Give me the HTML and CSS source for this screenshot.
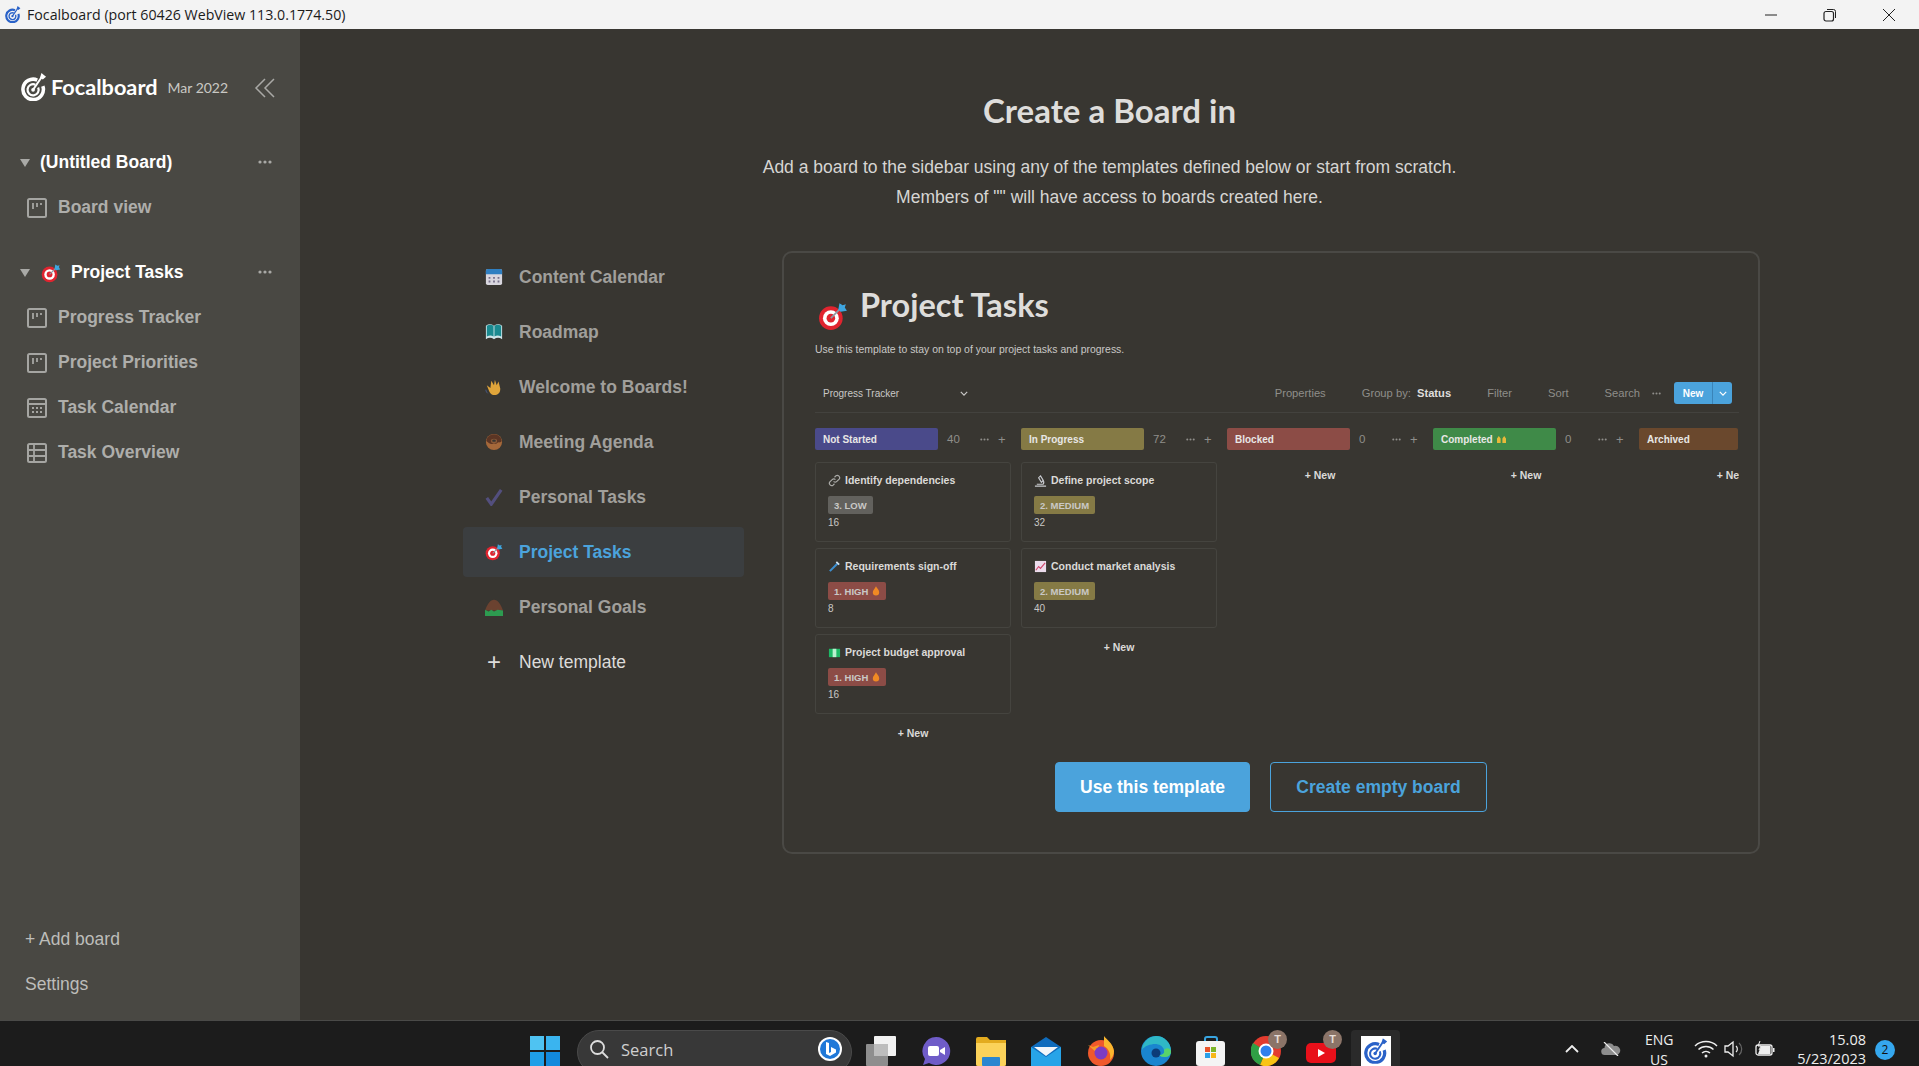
FILE: index.html
```html
<!DOCTYPE html>
<html lang="en">
<head>
  <meta charset="UTF-8" />
  <title>Focalboard</title>
  <link rel="stylesheet" href="styles.css">
</head>
<body>

  <!-- Shared icons -->
  <svg class="sprite" width="0" height="0">
    <symbol id="i-board" viewBox="0 0 20 20">
      <rect x="1" y="1" width="18" height="18" rx="1.5" fill="none" stroke="currentColor" stroke-width="2"/>
      <path d="M6 5v6M10 5v4M14 5v2" stroke="currentColor" stroke-width="1.8" fill="none"/>
    </symbol>
    <symbol id="i-cal" viewBox="0 0 20 20">
      <rect x="1" y="1" width="18" height="18" rx="1.5" fill="none" stroke="currentColor" stroke-width="2"/>
      <path d="M1 6h18M5 10h2M9 10h2M13 10h2M5 14h2M9 14h2M13 14h2" stroke="currentColor" stroke-width="1.8" fill="none"/>
    </symbol>
    <symbol id="i-table" viewBox="0 0 20 20">
      <rect x="1" y="1" width="18" height="18" rx="1.5" fill="none" stroke="currentColor" stroke-width="2"/>
      <path d="M1 7h18M1 13h18M7 1v18" stroke="currentColor" stroke-width="1.8" fill="none"/>
    </symbol>
    <symbol id="i-target" viewBox="0 0 28 28">
      <circle cx="12" cy="16" r="11" fill="#e0242f"/>
      <circle cx="12" cy="16" r="7.4" fill="#fff"/>
      <circle cx="12" cy="16" r="4" fill="#e0242f"/>
      <path d="M12 16L22 6" stroke="#8a9aa5" stroke-width="1.6"/>
      <path d="M19 8l1-6 3 2 3-1-1 3 2 3-6 1z" fill="#3ea6e0"/>
    </symbol>
    <symbol id="i-dots" viewBox="0 0 14 4">
      <circle cx="2" cy="2" r="1.6" fill="currentColor"/>
      <circle cx="7" cy="2" r="1.6" fill="currentColor"/>
      <circle cx="12" cy="2" r="1.6" fill="currentColor"/>
    </symbol>
    <symbol id="i-logo" viewBox="0 0 28 30">
      <path d="M17.500 7.500A11 11 0 1 0 23.500 14" fill="none" stroke="currentColor" stroke-width="3.800"/>
      <path d="M15.500 12.500A6 6 0 1 0 18.500 15.500" fill="none" stroke="currentColor" stroke-width="2.400"/>
      <circle cx="13" cy="18" r="2" fill="currentColor"/>
      <path d="M13 18L22.500 4" stroke="currentColor" stroke-width="2.200"/>
      <path d="M22 0l-1.500 5 3 2 3.500-3z" fill="currentColor"/>
    </symbol>
    <symbol id="i-chev" viewBox="0 0 10 6">
      <path d="M1 1l4 4 4-4" fill="none" stroke="currentColor" stroke-width="1.5"/>
    </symbol>
    <symbol id="i-fire" viewBox="0 0 10 12">
      <path d="M5 0c1 3 4 4 4 7.500a4 4 0 0 1-8 0C1 5 3 4 5 0z" fill="#f08a24"/>
    </symbol>
  </svg>

  <div class="titlebar">
    <svg class="titlebar-icon" viewBox="0 0 28 30"><use href="#i-logo" color="#2a62c8"/></svg>
    <span class="titlebar-text">Focalboard (port 60426 WebView 113.0.1774.50)</span>
    <div class="window-btns">
      <svg viewBox="0 0 14 14"><path d="M1 7h12" stroke="#222" stroke-width="1"/></svg>
      <svg viewBox="0 0 14 14"><rect x="1" y="3.500" width="9.500" height="9.500" rx="2" fill="none" stroke="#222" stroke-width="1.200"/><path d="M4 1.500h6.500a2 2 0 0 1 2 2V10" fill="none" stroke="#222"/></svg>
      <svg viewBox="0 0 14 14"><path d="M1 1l12 12M13 1L1 13" stroke="#222" stroke-width="1"/></svg>
    </div>
  </div>

  <div class="app">
    <aside class="sidebar">
      <div class="side-header">
        <svg class="logo" viewBox="0 0 28 30"><use href="#i-logo"/></svg>
        <span class="logo-text">Focalboard</span>
        <span class="logo-date">Mar 2022</span>
        <svg class="collapse" viewBox="0 0 22 20"><path d="M11 1L2 10l9 9M20 1l-9 9 9 9" fill="none" stroke="currentColor" stroke-width="1.500"/></svg>
      </div>

      <div class="side-group">
        <div class="side-row side-title">
          <span class="arrow"></span>
          <span class="side-name">(Untitled Board)</span>
          <svg class="side-dots"><use href="#i-dots"/></svg>
        </div>
        <div class="side-row side-view"><svg class="view-icon"><use href="#i-board"/></svg>Board view</div>
      </div>

      <div class="side-group">
        <div class="side-row side-title">
          <span class="arrow"></span>
          <svg class="side-emoji"><use href="#i-target"/></svg>
          <span class="side-name">Project Tasks</span>
          <svg class="side-dots"><use href="#i-dots"/></svg>
        </div>
        <div class="side-row side-view"><svg class="view-icon"><use href="#i-board"/></svg>Progress Tracker</div>
        <div class="side-row side-view"><svg class="view-icon"><use href="#i-board"/></svg>Project Priorities</div>
        <div class="side-row side-view"><svg class="view-icon"><use href="#i-cal"/></svg>Task Calendar</div>
        <div class="side-row side-view"><svg class="view-icon"><use href="#i-table"/></svg>Task Overview</div>
      </div>

      <div class="side-footer">
        <div class="side-link">+ Add board</div>
        <div class="side-link">Settings</div>
      </div>
    </aside>

    <main class="main">
      <h1>Create a Board in</h1>
      <p class="sub">Add a board to the sidebar using any of the templates defined below or start from scratch.</p>
      <p class="sub">Members of "" will have access to boards created here.</p>

      <div class="template-row">
        <ul class="template-list">
          <li class="template-item">
            <svg class="template-icon" viewBox="0 0 20 20"><rect x="1" y="1" width="18" height="18" rx="2" fill="#d8d6de"/><path d="M1 3a2 2 0 0 1 2-2h14a2 2 0 0 1 2 2v4H1z" fill="#2f7fc1"/><path d="M4 10h2v2H4zM9 10h2v2H9zM14 10h2v2h-2zM4 14h2v2H4zM9 14h2v2H9zM14 14h2v2h-2z" fill="#77708a"/></svg>
            Content Calendar
          </li>
          <li class="template-item">
            <svg class="template-icon" viewBox="0 0 20 20"><path d="M1 3c3-2 6-2 9 0 3-2 6-2 9 0v15c-3-2-6-2-9 0-3-2-6-2-9 0z" fill="#cfe6ea"/><path d="M2 3c3-1.500 5-1.500 7.500 0v12c-2.500-1.500-4.500-1.500-7.500 0zM10.500 3c2.500-1.500 4.500-1.500 7.500 0v12c-3-1.500-5-1.500-7.500 0z" fill="#1a8a90"/></svg>
            Roadmap
          </li>
          <li class="template-item">
            <svg class="template-icon" viewBox="0 0 20 20"><path d="M7 3l3 5 1-6 2 6 2-4 2 8c0 5-3 7-6.500 7S5 16 4 13L2 8l4 3z" fill="#e0a53a"/><path d="M1 13c0 2 1 3 2 4" stroke="#4a5f8f" fill="none"/></svg>
            Welcome to Boards!
          </li>
          <li class="template-item">
            <svg class="template-icon" viewBox="0 0 20 20"><circle cx="10" cy="10" r="9" fill="#a5683a"/><path d="M1.500 9a8.500 7.500 0 0 1 17 0c-2 3-3 0-5 2s-3 0-5 1-5-1-7-3z" fill="#5b3524"/><ellipse cx="10" cy="9" rx="3.500" ry="2.500" fill="#8a5a38"/><ellipse cx="10" cy="8.500" rx="2" ry="1.300" fill="#383631"/></svg>
            Meeting Agenda
          </li>
          <li class="template-item">
            <svg class="template-icon" viewBox="0 0 20 20"><path d="M2 11l5 7L18 2" fill="none" stroke="#534f7e" stroke-width="3.500"/></svg>
            Personal Tasks
          </li>
          <li class="template-item is-active">
            <svg class="template-icon"><use href="#i-target"/></svg>
            Project Tasks
          </li>
          <li class="template-item">
            <svg class="template-icon" viewBox="0 0 20 20"><path d="M0 14C3 6 6 2 10 2s7 4 10 12z" fill="#6b4230"/><path d="M0 13l4 2 3-2 3 2 4-2 6 1v6H0z" fill="#2d9b50"/></svg>
            Personal Goals
          </li>
          <li class="template-item is-new"><span class="template-plus">+</span>New template</li>
        </ul>

        <section class="preview">
          <div class="preview-title">
            <svg class="preview-emoji"><use href="#i-target"/></svg>
            <h2>Project Tasks</h2>
          </div>
          <p class="preview-desc">Use this template to stay on top of your project tasks and progress.</p>

          <div class="view-header">
            <span class="view-name">Progress Tracker</span>
            <svg class="view-chev"><use href="#i-chev"/></svg>
            <div class="view-actions">
              <span class="action act-gap">Properties</span>
              <span class="action act-gap">Group by: <b>Status</b></span>
              <span class="action act-gap">Filter</span>
              <span class="action act-gap">Sort</span>
              <span class="action act-search">Search</span>
              <svg class="act-dots"><use href="#i-dots"/></svg>
              <div class="new-btn"><span>New</span><i><svg><use href="#i-chev"/></svg></i></div>
            </div>
          </div>

          <div class="columns">
            <div class="col">
              <div class="col-head">
                <span class="col-label lbl-purple">Not Started</span><span class="col-count">40</span>
                <svg class="col-dots"><use href="#i-dots"/></svg><span class="col-plus">+</span>
              </div>
              <div class="card">
                <div class="card-title">
                  <svg class="card-icon" viewBox="0 0 14 14"><path d="M6 8a2.500 2.500 0 0 0 3.500 0l2.500-2.500A2.500 2.500 0 0 0 8.500 2L7 3.500M8 6a2.500 2.500 0 0 0-3.500 0L2 8.500A2.500 2.500 0 0 0 5.500 12L7 10.500" fill="none" stroke="#a9a9a6" stroke-width="1.300"/></svg>
                  Identify dependencies
                </div>
                <span class="badge bg-grey">3. LOW</span>
                <div class="card-num">16</div>
              </div>
              <div class="card">
                <div class="card-title">
                  <svg class="card-icon" viewBox="0 0 14 14"><path d="M2 12L10 4" stroke="#3d8fd0" stroke-width="2.200"/><path d="M9 2l3 3" stroke="#d5e6f2" stroke-width="1.800"/></svg>
                  Requirements sign-off
                </div>
                <span class="badge bg-red">1. HIGH <svg class="fire"><use href="#i-fire"/></svg></span>
                <div class="card-num">8</div>
              </div>
              <div class="card">
                <div class="card-title">
                  <svg class="card-icon" viewBox="0 0 14 14"><path d="M1 3h12v9H1z" fill="#1db866"/><rect x="5" y="3" width="4" height="9" fill="#b9f0cf"/></svg>
                  Project budget approval
                </div>
                <span class="badge bg-red">1. HIGH <svg class="fire"><use href="#i-fire"/></svg></span>
                <div class="card-num">16</div>
              </div>
              <div class="col-new">+ New</div>
            </div>

            <div class="col">
              <div class="col-head">
                <span class="col-label lbl-yellow">In Progress</span><span class="col-count">72</span>
                <svg class="col-dots"><use href="#i-dots"/></svg><span class="col-plus">+</span>
              </div>
              <div class="card">
                <div class="card-title">
                  <svg class="card-icon" viewBox="0 0 14 14"><path d="M1 13h12M3 11h7M7 2l3 5-2 2-3-5zM9 6a4 4 0 0 1 1 5" fill="none" stroke="#c9cbd0" stroke-width="1.200"/></svg>
                  Define project scope
                </div>
                <span class="badge bg-yellow">2. MEDIUM</span>
                <div class="card-num">32</div>
              </div>
              <div class="card">
                <div class="card-title">
                  <svg class="card-icon" viewBox="0 0 14 14"><rect x="1" y="1" width="12" height="12" fill="#ecdcec"/><path d="M2 11l3-4 2 2 5-6" fill="none" stroke="#d0456a" stroke-width="1.200"/></svg>
                  Conduct market analysis
                </div>
                <span class="badge bg-yellow">2. MEDIUM</span>
                <div class="card-num">40</div>
              </div>
              <div class="col-new">+ New</div>
            </div>

            <div class="col">
              <div class="col-head">
                <span class="col-label lbl-red">Blocked</span><span class="col-count">0</span>
                <svg class="col-dots"><use href="#i-dots"/></svg><span class="col-plus">+</span>
              </div>
              <div class="col-new col-new-top">+ New</div>
            </div>

            <div class="col">
              <div class="col-head">
                <span class="col-label lbl-green">Completed <svg class="hands" viewBox="0 0 12 10"><path d="M1 9V4l2-3 2 3v5zM7 9V4l2-3 2 3v5z" fill="#e8b93a"/></svg></span><span class="col-count">0</span>
                <svg class="col-dots"><use href="#i-dots"/></svg><span class="col-plus">+</span>
              </div>
              <div class="col-new col-new-top">+ New</div>
            </div>

            <div class="col">
              <div class="col-head">
                <span class="col-label lbl-brown">Archived</span>
              </div>
              <div class="col-new col-new-top">+ New</div>
            </div>
          </div>

          <div class="preview-btns">
            <button class="btn btn-fill">Use this template</button>
            <button class="btn btn-line">Create empty board</button>
          </div>
        </section>
      </div>
    </main>
  </div>

  <div class="taskbar">
    <div class="task-center">
      <svg class="tb-icon tb-win" viewBox="0 0 30 30">
        <path d="M0 0h14v14H0z" fill="#4fc3f2"/><path d="M16 0h14v14H16z" fill="#3ab4ef"/><path d="M0 16h14v14H0z" fill="#1f9fe8"/><path d="M16 16h14v14H16z" fill="#1289dc"/>
      </svg>
      <div class="tb-search">
        <svg class="tb-glass" viewBox="0 0 20 20"><circle cx="8.500" cy="8.500" r="6.500" fill="none" stroke="#ddd" stroke-width="1.800"/><path d="M13 13l6 6" stroke="#ddd" stroke-width="1.800"/></svg>
        <span>Search</span>
        <svg class="tb-bing" viewBox="0 0 26 26"><circle cx="13" cy="13" r="12" fill="#fff"/><circle cx="13" cy="13" r="10" fill="#1f78d8"/><path d="M9 6v12l4 2 6-3.500v-3L14 11v5l-2 1V7z" fill="#fff"/></svg>
      </div>
      <svg class="tb-icon" viewBox="0 0 30 30"><rect x="0" y="8" width="22" height="22" rx="1" fill="#8e8e8e"/><rect x="8" y="0" width="22" height="20" rx="1" fill="#f2f2f2"/><rect x="8" y="8" width="14" height="12" fill="#bdbdbd"/></svg>
      <svg class="tb-icon" viewBox="0 0 30 30"><path d="M15 1a14 14 0 1 1-7 26l-6 2 2-6A14 14 0 0 1 15 1z" fill="#6f5cc8"/><rect x="7" y="10" width="11" height="10" rx="2" fill="#fff"/><path d="M19 14l5-3v8l-5-3z" fill="#fff"/></svg>
      <svg class="tb-icon" viewBox="0 0 30 30"><path d="M0 3a2 2 0 0 1 2-2h9l3 3h16v24a2 2 0 0 1-2 2H2a2 2 0 0 1-2-2z" fill="#e3ab1f"/><path d="M0 7h30v21a2 2 0 0 1-2 2H2a2 2 0 0 1-2-2z" fill="#fbd25a"/><rect x="6" y="21" width="18" height="9" rx="1" fill="#2a86d0"/></svg>
      <svg class="tb-icon" viewBox="0 0 30 30"><path d="M0 11L15 1l15 10v19H0z" fill="#0f6cbd"/><path d="M3 11h24L15 20z" fill="#f2f6fa"/><path d="M0 11l15 10 15-10v19H0z" fill="#27a4e8"/></svg>
      <svg class="tb-icon" viewBox="0 0 30 30"><circle cx="15" cy="17" r="13" fill="#f0592b"/><path d="M18 0c2 3 9 7 10 15 0 4-2 7-4 9 1-6-1-11-6-14z" fill="#fbb62e"/><path d="M2 9l5 2 6-2-2 8z" fill="#f59a2a"/><circle cx="15" cy="17" r="6.500" fill="#7d3cc4"/></svg>
      <svg class="tb-icon" viewBox="0 0 30 30"><circle cx="15" cy="15" r="15" fill="#1a85cf"/><path d="M15 0a15 15 0 0 1 15 15c0 3-2 6-6 6-3 0-5-1-6-2 4 0 6-2 5-5-1-4-5-6-9-6S3 10 1 14A15 15 0 0 1 15 0z" fill="#2fb8c6"/><path d="M30 15c0 3-2 6-6 6-3 0-5-1-6-2 4 0 6-2 5-5 3-3 6-2 7 1z" fill="#58d36a"/><circle cx="15" cy="17" r="4.500" fill="#0c3c78"/></svg>
      <svg class="tb-icon" viewBox="0 0 30 30"><path d="M9 6V3a2 2 0 0 1 2-2h8a2 2 0 0 1 2 2v3" fill="none" stroke="#38a4e0" stroke-width="2"/><rect x="0" y="5" width="29" height="25" rx="3" fill="#f4f4f4"/><rect x="9" y="11" width="5" height="5" fill="#e8532a"/><rect x="15" y="11" width="5" height="5" fill="#7bb52a"/><rect x="9" y="17" width="5" height="5" fill="#2aa0e8"/><rect x="15" y="17" width="5" height="5" fill="#f7b718"/></svg>
      <div class="tb-badged">
        <svg class="tb-icon" viewBox="0 0 30 30"><circle cx="15" cy="15" r="15" fill="#e33b2e"/><path d="M15 15L28 22A15 15 0 0 1 9 29z" fill="#f9c414"/><path d="M15 15L9 29A15 15 0 0 1 2 7z" fill="#2fa045"/><circle cx="15" cy="15" r="7.500" fill="#fff"/><circle cx="15" cy="15" r="5.500" fill="#2f80ed"/></svg>
        <span class="tb-t">T</span>
      </div>
      <div class="tb-badged">
        <svg class="tb-icon" viewBox="0 0 30 30"><rect x="0" y="7" width="30" height="20" rx="5" fill="#e8101a"/><path d="M12 13l7 4-7 4z" fill="#fff"/></svg>
        <span class="tb-t">T</span>
      </div>
      <div class="tb-active">
        <svg class="tb-focal" viewBox="0 0 30 30"><rect width="30" height="30" fill="#fff"/><svg x="3" y="2" width="24" height="26" viewBox="0 0 28 30"><use href="#i-logo" color="#2a62c8"/></svg></svg>
      </div>
    </div>

    <div class="tray">
      <svg class="tray-chev" viewBox="0 0 14 8"><path d="M1 7l6-6 6 6" fill="none" stroke="#eee" stroke-width="1.800"/></svg>
      <svg class="tray-cloud" viewBox="0 0 20 14"><path d="M4 13a3.500 3.500 0 0 1-.5-7A5 5 0 0 1 13 4a4.500 4.500 0 0 1 3 9z" fill="#8d8d8d"/><path d="M3 0l14 14" stroke="#eee" stroke-width="1.200"/></svg>
      <div class="tray-lang">ENG<br>US</div>
      <svg class="tray-wifi" viewBox="0 0 24 18"><path d="M1 6a16 16 0 0 1 22 0M4.500 9.500a11 11 0 0 1 15 0M8 13a6 6 0 0 1 8 0" fill="none" stroke="#eee" stroke-width="1.500"/><circle cx="12" cy="16" r="1.500" fill="#eee"/></svg>
      <svg class="tray-vol" viewBox="0 0 20 18"><path d="M1 6h3l5-4v14l-5-4H1z" fill="none" stroke="#eee" stroke-width="1.300"/><path d="M12 6a4 4 0 0 1 0 6" fill="none" stroke="#eee" stroke-width="1.200"/><path d="M15 3a8 8 0 0 1 0 12" fill="none" stroke="#666" stroke-width="1.200"/></svg>
      <svg class="tray-bat" viewBox="0 0 20 16"><rect x="1" y="4" width="16" height="10" rx="2" fill="none" stroke="#eee" stroke-width="1.300"/><path d="M6 5h9.500v8H3z" fill="#eee"/><rect x="18" y="7" width="1.500" height="4" fill="#eee"/><path d="M5 0L3 5h3L4 9" stroke="#eee" fill="none"/></svg>
      <div class="tray-clock">15.08<br>5/23/2023</div>
      <span class="tray-badge">2</span>
    </div>
  </div>

</body>
</html>
```
FILE: styles.css
```css
* {
  box-sizing: border-box;
}
html, body {
  height: 100%;
}
body {
  margin: 0;
  display: flex;
  flex-direction: column;
  height: 1066px;
  overflow: hidden;
  font-family: 'Liberation Sans', Arial, sans-serif;
  background: #383631;
  color: #fff;
}
.sprite {
  position: absolute;
}

/* Window title bar */
.titlebar {
  height: 29px;
  flex: none;
  display: flex;
  align-items: center;
  padding-left: 5px;
  background: #f3f3f3;
  color: #1b1b1b;
}
.titlebar-icon {
  width: 16px;
  height: 17px;
}
.titlebar-text {
  margin-left: 6px;
  font-family: 'Open Sans', sans-serif;
  font-size: 14.2px;
}
.window-btns {
  margin-left: auto;
  display: flex;
  gap: 45px;
  padding-right: 23px;
}
.window-btns svg {
  width: 14px;
  height: 14px;
}

.app {
  flex: 1;
  display: flex;
  min-height: 0;
}

/* Sidebar */
.sidebar {
  width: 300px;
  flex: none;
  display: flex;
  flex-direction: column;
  background: #494843;
  padding-bottom: 13px;
}
.side-header {
  height: 111px;
  display: flex;
  align-items: center;
  padding: 5px 0 0 21px;
}
.logo {
  width: 26px;
  height: 30px;
  color: #fff;
}
.logo-text {
  margin-left: 4px;
  font-family: 'Lato', sans-serif;
  font-weight: 700;
  font-size: 21.7px;
}
.logo-date {
  margin-left: 10px;
  font-size: 14px;
  color: #c9c8c4;
  font-family: 'Lato', sans-serif;
}
.collapse {
  width: 22px;
  height: 20px;
  margin: 2px 0 0 26px;
  color: #a9a9a6;
}
.side-group {
  margin-bottom: 20px;
}
.side-row {
  height: 45px;
  display: flex;
  align-items: center;
  font-size: 17.5px;
  font-weight: 700;
}
.side-title {
  padding-left: 20px;
}
.arrow {
  width: 0;
  height: 0;
  border-left: 5px solid transparent;
  border-right: 5px solid transparent;
  border-top: 8px solid #a9a9a6;
  margin-right: 10px;
}
.side-emoji {
  width: 20px;
  height: 20px;
  margin: 0 10px 0 1px;
}
.side-dots {
  width: 14px;
  height: 4px;
  margin: 0 28px 2px auto;
  color: #a9a9a6;
}
.side-view {
  padding-left: 27px;
  color: #aeaeab;
}
.view-icon {
  width: 20px;
  height: 20px;
  margin-right: 11px;
  color: #a5a5a2;
}
.side-footer {
  margin-top: auto;
}
.side-link {
  height: 45px;
  display: flex;
  align-items: center;
  padding-left: 25px;
  font-size: 17.5px;
  color: #bdbdba;
}

/* Main area */
.main {
  flex: 1;
  min-width: 0;
  display: flex;
  flex-direction: column;
  align-items: center;
}
h1 {
  margin: 62px 0 0;
  height: 38px;
  line-height: 38px;
  font-family: 'Lato', sans-serif;
  font-size: 33px;
  font-weight: 700;
  color: #dedddb;
}
.sub {
  margin: 0;
  height: 30px;
  line-height: 30px;
  font-size: 17.5px;
  color: #d6d5d3;
}
h1 + .sub {
  margin-top: 23px;
}
.template-row {
  align-self: stretch;
  display: flex;
  align-items: flex-start;
  gap: 38px;
  padding-left: 163px;
  margin-top: 39px;
}

/* Template list */
.template-list {
  list-style: none;
  margin: 1px 0 0;
  padding: 0;
  width: 281px;
  flex: none;
  display: flex;
  flex-direction: column;
  gap: 5px;
}
.template-item {
  height: 50px;
  display: flex;
  align-items: center;
  padding-left: 22px;
  border-radius: 4px;
  font-size: 17.5px;
  font-weight: 700;
  color: #a09f9b;
}
.template-icon {
  width: 18px;
  height: 18px;
  margin-right: 16px;
  flex: none;
}
.is-active {
  background: #3b3e40;
  color: #4ba3dc;
}
.is-new {
  font-weight: 400;
  color: #dddcda;
}
.template-plus {
  width: 18px;
  margin-right: 16px;
  text-align: center;
  font-size: 24px;
  font-weight: 400;
}

/* Template preview card */
.preview {
  width: 978px;
  height: 603px;
  flex: none;
  border: 2px solid #4a4945;
  border-radius: 10px;
  padding: 0 19px 0 31px;
  overflow: hidden;
}
.preview-title {
  display: flex;
  align-items: flex-start;
  padding-top: 30px;
  height: 87px;
}
.preview-emoji {
  width: 30px;
  height: 30px;
  margin: 18px 12px 0 3px;
}
h2 {
  margin: 0;
  font-family: 'Lato', sans-serif;
  font-size: 32.5px;
  font-weight: 700;
  line-height: 44px;
  color: #dedddb;
}
.preview-desc {
  margin: 0;
  height: 20px;
  line-height: 20px;
  font-size: 10.45px;
  color: #c9c8c6;
}
.view-header {
  height: 47px;
  margin-top: 6px;
  width: 924px;
  display: flex;
  align-items: center;
  padding: 8px 0 0 8px;
  border-bottom: 1px solid #43423e;
}
.view-name {
  font-size: 10px;
  width: 137px;
  color: #c9c8c6;
}
.view-chev {
  width: 8px;
  height: 5px;
  color: #c9c8c6;
}
.view-actions {
  margin-left: auto;
  margin-right: 7px;
  display: flex;
  align-items: center;
}
.action {
  font-size: 11.2px;
  color: #8f8e8a;
}
.action b {
  color: #dedddb;
  margin-left: 3px;
}
.act-gap {
  margin-right: 36px;
}
.act-search {
  margin-right: 12px;
}
.act-dots {
  width: 9px;
  height: 3px;
  color: #8f8e8a;
  margin-right: 13px;
}
.new-btn {
  width: 58px;
  height: 22px;
  display: flex;
  align-items: center;
  background: #4ba3dc;
  border-radius: 3px;
  font-size: 10px;
  font-weight: 700;
}
.new-btn span {
  flex: 1;
  text-align: center;
}
.new-btn i {
  width: 20px;
  height: 22px;
  display: flex;
  align-items: center;
  justify-content: center;
  border-left: 1px solid #3a84b8;
}
.new-btn svg {
  width: 8px;
  height: 5px;
}

/* Kanban columns inside the preview */
.columns {
  display: flex;
  gap: 10px;
  margin-top: 15px;
  width: 924px;
  overflow: hidden;
  height: 319px;
}
.col {
  width: 196px;
  flex: none;
}
.col-head {
  height: 22px;
  display: flex;
  align-items: center;
  margin-bottom: 12px;
}
.col-label {
  width: 123px;
  height: 22px;
  flex: none;
  display: flex;
  align-items: center;
  gap: 3px;
  padding-left: 8px;
  border-radius: 2px;
  font-size: 10px;
  font-weight: 700;
  color: #e8e7e5;
}
.col:last-child .col-label {
  width: 99px;
}
.lbl-purple { background: #4a4a8a; }
.lbl-yellow { background: #857a45; }
.lbl-red { background: #8c4c46; }
.lbl-green { background: #3f8a48; }
.lbl-brown { background: #6a482d; }
.hands {
  width: 11px;
  height: 9px;
}
.col-count {
  margin-left: 9px;
  width: 33px;
  font-size: 11.5px;
  color: #8f8e8a;
}
.col-dots {
  width: 9px;
  height: 3px;
  color: #8f8e8a;
}
.col-plus {
  margin-left: 9px;
  font-size: 13px;
  color: #8f8e8a;
}
.card {
  height: 80px;
  margin-bottom: 6px;
  border: 1px solid #45443f;
  border-radius: 3px;
  padding: 9px 12px;
}
.card-title {
  display: flex;
  align-items: center;
  height: 16px;
  gap: 4px;
  font-size: 10.5px;
  font-weight: 700;
  color: #dbdad8;
  white-space: nowrap;
}
.card-icon {
  width: 13px;
  height: 13px;
  flex: none;
}
.badge {
  display: inline-flex;
  align-items: center;
  gap: 4px;
  height: 18px;
  margin-top: 8px;
  padding: 0 6px;
  border-radius: 2px;
  font-size: 9.5px;
  font-weight: 700;
  color: #c9c8c6;
}
.bg-grey { background: #62615d; }
.bg-red { background: #8c4c46; }
.bg-yellow { background: #857a45; }
.fire {
  width: 8px;
  height: 10px;
}
.card-num {
  margin-top: 3px;
  font-size: 10px;
  color: #c9c8c6;
}
.col-new {
  margin-top: 13px;
  text-align: center;
  font-size: 10.5px;
  font-weight: 700;
  color: #dbdad8;
}
.col-new-top {
  margin-top: 19px;
  padding-right: 10px;
}

.preview-btns {
  display: flex;
  justify-content: flex-start;
  gap: 20px;
  padding-left: 240px;
  margin-top: 15px;
}
.btn {
  height: 50px;
  border-radius: 4px;
  font-family: inherit;
  font-size: 17.5px;
  font-weight: 700;
  border: 1px solid #4ba3dc;
}
.btn-fill {
  width: 195px;
  background: #4ba3dc;
  color: #fff;
}
.btn-line {
  width: 217px;
  background: transparent;
  color: #4ba3dc;
}

/* Windows taskbar */
.taskbar {
  height: 46px;
  flex: none;
  display: flex;
  background: #1c1c1c;
  border-top: 1px solid #4a4a48;
  overflow: hidden;
}
.task-center {
  display: flex;
  align-items: flex-start;
  padding: 15px 0 0 530px;
}
.tb-icon {
  width: 30px;
  height: 30px;
  margin-right: 25px;
  flex: none;
}
.tb-win {
  margin-right: 17px;
}
.tb-search {
  width: 275px;
  height: 44px;
  margin-top: -6px;
  margin-right: 14px;
  display: flex;
  align-items: center;
  padding: 0 8px 6px 11px;
  background: #383838;
  border-radius: 22px;
  border: 1px solid #4a4a4a;
  font-family: 'Open Sans', sans-serif;
  font-size: 16.5px;
  color: #cfcfcf;
}
.tb-glass {
  width: 20px;
  height: 20px;
  margin-right: 12px;
}
.tb-bing {
  width: 26px;
  height: 26px;
  margin-left: auto;
}
.tb-badged {
  position: relative;
}
.tb-t {
  position: absolute;
  left: 17px;
  top: -6px;
  width: 19px;
  height: 19px;
  border-radius: 50%;
  background: #8b7468;
  color: #e6dcd6;
  font-size: 11px;
  font-weight: 700;
  text-align: center;
  line-height: 19px;
}
.tb-active {
  width: 49px;
  height: 40px;
  margin: -6px 0 0 -10px;
  padding: 6px 0 0 10px;
  background: #2a2a2a;
  border-radius: 4px 4px 0 0;
}
.tb-focal {
  width: 30px;
  height: 30px;
  display: block;
}

/* System tray */
.tray {
  margin-left: auto;
  display: flex;
  align-items: flex-start;
  padding-top: 9px;
  font-family: 'Open Sans', sans-serif;
  font-size: 14px;
  color: #eee;
}
.tray svg {
  flex: none;
}
.tray-chev {
  width: 14px;
  height: 8px;
  margin: 15px 22px 0 0;
}
.tray-cloud {
  width: 20px;
  height: 14px;
  margin: 12px 24px 0 0;
}
.tray-lang {
  width: 28px;
  text-align: center;
  line-height: 20px;
  margin-right: 21px;
  font-size: 14px;
}
.tray-wifi {
  width: 24px;
  height: 18px;
  margin: 10px 6px 0 0;
}
.tray-vol {
  width: 20px;
  height: 18px;
  margin: 10px 11px 0 0;
}
.tray-bat {
  width: 20px;
  height: 16px;
  margin: 11px 0 0 0;
}
.tray-clock {
  width: 91px;
  text-align: right;
  line-height: 19px;
  font-size: 14.5px;
}
.tray-badge {
  width: 20px;
  height: 20px;
  margin: 10px 24px 0 9px;
  border-radius: 50%;
  background: #35a7ee;
  color: #111;
  font-size: 12px;
  text-align: center;
  line-height: 20px;
}
```
